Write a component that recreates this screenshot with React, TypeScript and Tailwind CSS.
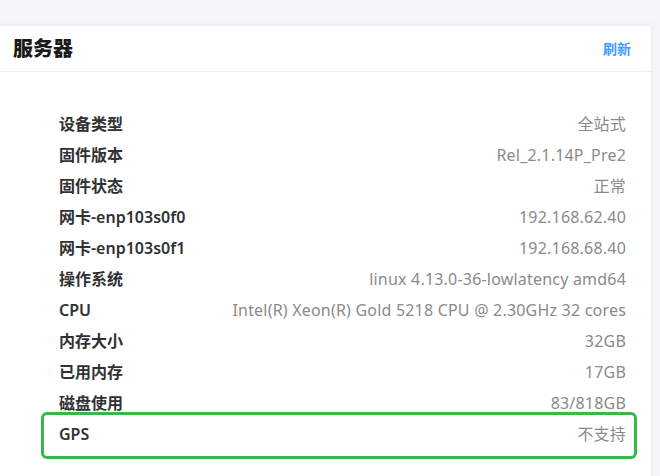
const rows: [string, string][] = [
  ["设备类型", "全站式"],
  ["固件版本", "Rel_2.1.14P_Pre2"],
  ["固件状态", "正常"],
  ["网卡-enp103s0f0", "192.168.62.40"],
  ["网卡-enp103s0f1", "192.168.68.40"],
  ["操作系统", "linux 4.13.0-36-lowlatency amd64"],
  ["CPU", "Intel(R) Xeon(R) Gold 5218 CPU @ 2.30GHz 32 cores"],
  ["内存大小", "32GB"],
  ["已用内存", "17GB"],
  ["磁盘使用", "83/818GB"],
];

function InfoRow({ label, value }: { label: string; value: string }) {
  return (
    <div className="flex h-[31px] items-center justify-between">
      <span className="text-[16px] font-semibold text-[#303133]">{label}</span>
      <span className="text-[16px] tracking-[0.2px] text-[#8a8a8a]">{value}</span>
    </div>
  );
}

export default function App() {
  return (
    <div
      className="h-[476px] w-[660px] overflow-hidden bg-[#f7f7f9] pt-[25px]"
      style={{ fontFamily: '"Noto Sans", "Noto Sans CJK SC", sans-serif' }}
    >
      <div className="-ml-[8px] h-[470px] w-[660px] rounded-[4px] border border-[#ebeef5] bg-white shadow-[0_0_10px_rgba(0,0,0,0.05)]">
        <div className="flex h-[46px] items-center justify-between border-b border-[#ebeef5] pl-[20px] pr-[20px]">
          <h2 className="text-[20px] font-extrabold text-[#1a1a1a]">服务器</h2>
          <button className="text-[14px] font-bold text-[#409eff]">刷新</button>
        </div>
        <div className="pl-[66px] pr-[25px] pt-[36px]">
          {rows.map(([l, v]) => (
            <InfoRow key={l} label={l} value={v} />
          ))}
          <div className="relative">
            <InfoRow label="GPS" value="不支持" />
            <div className="pointer-events-none absolute -bottom-[10px] -left-[18px] -right-[11px] -top-[6px] rounded-[6px] border-[3px] border-[#37b94a]" />
          </div>
        </div>
      </div>
    </div>
  );
}
